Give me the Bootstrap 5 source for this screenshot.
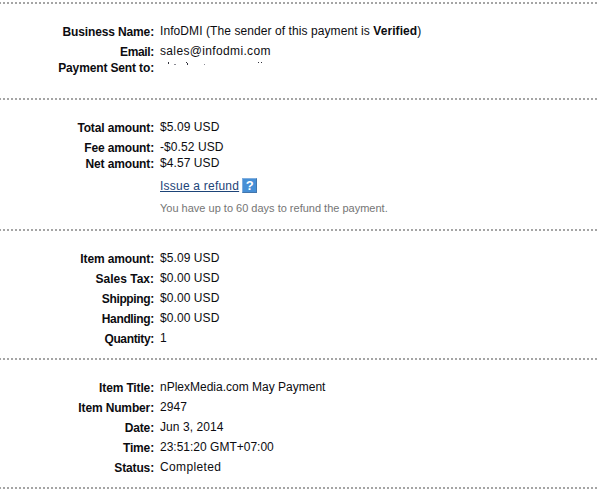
<!DOCTYPE html>
<html lang="en">
<head>
<meta charset="utf-8">
<meta name="viewport" content="width=device-width, initial-scale=1">
<title>Transaction Details</title>
<link rel="stylesheet" href="https://cdn.jsdelivr.net/npm/bootstrap@5.3.0/dist/css/bootstrap.min.css">
<style>
body{font:12px/16px "Liberation Sans",Arial,sans-serif;color:#0c0c10;background:#fff;overflow:hidden;padding-top:2px}
.group{padding-top:22px;background:repeating-linear-gradient(90deg,#a5a5a5 0 2px,#fff 2px 4px) -1px 0/calc(100% + 4px) 2px no-repeat}
.g-parties{height:96px}
.g-amounts{height:131px}
.g-items,.g-details{height:129px}
.g-end{height:2px;padding:0}
.entry{height:16px;margin-bottom:4px;white-space:nowrap}
.entry.tight{margin-bottom:0}
.entry dt{width:154px;margin-right:6px;letter-spacing:-.14px}
.entry dt.snug{letter-spacing:-.34px}
.entry dt.plain{letter-spacing:0}
.entry dd{margin:-1px 0 0;letter-spacing:.08px}
.entry dd.exact{letter-spacing:0}
.entry dd.wide{letter-spacing:.35px}
.redacted{display:block;margin-top:1px}
.refund{margin:6px 0 0 160px;height:16px}
.refund a{color:#1d4478;letter-spacing:.22px}
.hint{margin:6px 0 0 160px;font-size:11px;color:#757575}
.help{width:15px;height:15px;margin:0 0 0 3px;background:#468fd6;border:1px solid #80aede;border-right-color:#4376ac;border-bottom-color:#4376ac;color:#fff;font-size:13px;font-weight:700;line-height:13px}
</style>
</head>
<body>
<main>
<dl class="group g-parties mb-0">
<div class="entry d-flex"><dt class="text-end">Business Name:</dt><dd>InfoDMI (The sender of this payment is <strong>Verified</strong>)</dd></div>
<div class="entry tight d-flex"><dt class="text-end snug">Email:</dt><dd class="wide">sales@infodmi.com</dd></div>
<div class="entry d-flex"><dt class="text-end">Payment Sent to:</dt><dd><svg class="redacted" width="110" height="12" viewBox="0 0 110 12" shape-rendering="crispEdges"><path fill="#33333d" d="M8 2h1v2H8zM26 2h1v1h-1zM27 3h1v2h-1zM98 2h1v1h-1zM101 2h1v1h-1z"/><path fill="#8b8b94" d="M14 4h2v1h-2zM44 4h1v1h-1z"/></svg></dd></div>
</dl>
<section class="group g-amounts">
<dl class="mb-0">
<div class="entry d-flex"><dt class="text-end">Total amount:</dt><dd>$5.09 USD</dd></div>
<div class="entry tight d-flex"><dt class="text-end">Fee amount:</dt><dd>-$0.52 USD</dd></div>
<div class="entry tight d-flex"><dt class="text-end">Net amount:</dt><dd>$4.57 USD</dd></div>
</dl>
<div class="refund d-flex"><a href="#">Issue a refund</a><span class="help text-center">?</span></div>
<p class="hint">You have up to 60 days to refund the payment.</p>
</section>
<dl class="group g-items mb-0">
<div class="entry d-flex"><dt class="text-end">Item amount:</dt><dd>$5.09 USD</dd></div>
<div class="entry d-flex"><dt class="text-end plain">Sales Tax:</dt><dd>$0.00 USD</dd></div>
<div class="entry d-flex"><dt class="text-end snug">Shipping:</dt><dd>$0.00 USD</dd></div>
<div class="entry d-flex"><dt class="text-end snug">Handling:</dt><dd>$0.00 USD</dd></div>
<div class="entry d-flex"><dt class="text-end snug">Quantity:</dt><dd>1</dd></div>
</dl>
<dl class="group g-details mb-0">
<div class="entry d-flex"><dt class="text-end">Item Title:</dt><dd class="exact">nPlexMedia.com May Payment</dd></div>
<div class="entry d-flex"><dt class="text-end">Item Number:</dt><dd>2947</dd></div>
<div class="entry d-flex"><dt class="text-end">Date:</dt><dd>Jun 3, 2014</dd></div>
<div class="entry d-flex"><dt class="text-end">Time:</dt><dd class="exact">23:51:20 GMT+07:00</dd></div>
<div class="entry d-flex"><dt class="text-end">Status:</dt><dd class="wide">Completed</dd></div>
</dl>
<div class="group g-end"></div>
</main>
<script src="https://cdn.jsdelivr.net/npm/bootstrap@5.3.0/dist/js/bootstrap.bundle.min.js"></script>
</body>
</html>
